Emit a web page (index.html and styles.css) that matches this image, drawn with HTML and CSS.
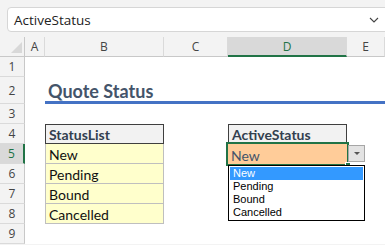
FILE: index.html
```html
<!DOCTYPE html>
<html lang="en">
<head>
    <meta charset="UTF-8">
    <title>Quote Status</title>
    <link rel="stylesheet" href="styles.css">
</head>
<body>

    <!-- Caixa de nome -->
    <div class="top-bar">
        <div class="name-box">
            <span>ActiveStatus</span>
            <svg class="chevron" width="10" height="6" viewBox="0 0 10 6"><path d="M1 1 L5 5 L9 1" fill="none" stroke="#444" stroke-width="1.1"/></svg>
        </div>
    </div>

    <!-- Planilha -->
    <div class="sheet">
        <div class="corner"><span class="corner-tri"></span></div>
        <div class="col-hdr">A</div>
        <div class="col-hdr">B</div>
        <div class="col-hdr">C</div>
        <div class="col-hdr active">D</div>
        <div class="col-hdr">E</div>

        <div class="row-hdr">1</div>
        <div class="blank span-all"></div>

        <div class="row-hdr">2</div>
        <div class="blank"></div>
        <div class="title">Quote Status</div>

        <div class="row-hdr">3</div>
        <div class="blank span-all"></div>

        <div class="row-hdr">4</div>
        <div class="blank"></div>
        <div class="tbl-head">StatusList</div>
        <div class="blank"></div>
        <div class="tbl-head">ActiveStatus</div>
        <div class="blank"></div>

        <div class="row-hdr active">5</div>
        <div class="blank"></div>
        <div class="tbl-cell">New</div>
        <div class="blank"></div>
        <div class="active-cell">
            New
            <span class="fill-handle"></span>
            <div class="drop-btn"><span class="drop-arrow"></span></div>
            <ul class="drop-list">
                <li class="selected">New</li>
                <li>Pending</li>
                <li>Bound</li>
                <li>Cancelled</li>
            </ul>
        </div>
        <div class="blank"></div>

        <div class="row-hdr">6</div>
        <div class="blank"></div>
        <div class="tbl-cell">Pending</div>
        <div class="blank span-rest"></div>

        <div class="row-hdr">7</div>
        <div class="blank"></div>
        <div class="tbl-cell">Bound</div>
        <div class="blank span-rest"></div>

        <div class="row-hdr">8</div>
        <div class="blank"></div>
        <div class="tbl-cell">Cancelled</div>
        <div class="blank span-rest"></div>

        <div class="row-hdr">9</div>
        <div class="blank span-all"></div>
    </div>

</body>
</html>
```

FILE: styles.css
```css
* {
    margin: 0;
    padding: 0;
    box-sizing: border-box;
}

body {
    font-family: Lato, "Liberation Sans", sans-serif;
    background-color: #f3f3f3;
    width: 385px;
    height: 245px;
    overflow: hidden;
}

/* Barra da caixa de nome */
.top-bar {
    height: 37px;
    padding: 7px 0 0 7px;
    overflow: hidden;
}

.name-box {
    height: 25px;
    width: calc(100% + 8px);
    background-color: #ffffff;
    border: 1px solid #d6d6d6;
    border-radius: 4px;
    display: flex;
    align-items: center;
    padding-left: 6px;
    font-family: "Open Sans", sans-serif;
    font-size: 13.5px;
    color: #222;
}

.chevron {
    margin-left: 278px;
}

/* Grade da planilha */
.sheet {
    display: grid;
    grid-template-columns: 25px 20px 119px 64px 119px 38px;
    grid-template-rows: 20px 20px 27px 20px 20px 20px 20px 20px 20px 20px;
    background-color: #ffffff;
}

.corner {
    background-color: #f3f3f3;
    border-right: 1px solid #c8c8c8;
    border-bottom: 1px solid #c8c8c8;
    position: relative;
}

.corner-tri {
    position: absolute;
    right: 2px;
    bottom: 3px;
    width: 0;
    height: 0;
    border-left: 11px solid transparent;
    border-bottom: 11px solid #d8d8d8;
}

.col-hdr {
    background-color: #f3f3f3;
    border-right: 1px solid #dadada;
    border-bottom: 1px solid #c8c8c8;
    font-family: "Open Sans", sans-serif;
    font-size: 12px;
    color: #444;
    display: flex;
    justify-content: center;
    align-items: center;
}

.col-hdr.active {
    background-color: #d9d9d9;
    border-bottom: 2px solid #217346;
    color: #217346;
}

.row-hdr {
    background-color: #f3f3f3;
    border-right: 1px solid #c8c8c8;
    border-bottom: 1px solid #dadada;
    font-family: "Open Sans", sans-serif;
    font-size: 12px;
    color: #444;
    display: flex;
    justify-content: center;
    align-items: center;
}

.row-hdr.active {
    background-color: #d9d9d9;
    border-right: 2px solid #217346;
    color: #217346;
}

.span-all {
    grid-column: 2 / -1;
}

.span-rest {
    grid-column: 4 / -1;
}

.title {
    grid-column: 3 / -1;
    border-bottom: 3px solid #4472c4;
    font-weight: bold;
    font-size: 18px;
    line-height: 20px;
    color: #44546a;
    padding: 4px 0 0 3px;
}

.tbl-head,
.tbl-cell,
.active-cell {
    font-size: 14px;
    line-height: 17px;
    padding: 0 3px;
    display: flex;
    align-items: flex-end;
}

.tbl-head {
    background-color: #f2f2f2;
    border: 1px solid #3f3f3f;
    font-weight: bold;
    color: #333f4f;
}

.tbl-cell {
    background-color: #ffffcc;
    border: 1px solid #bfbfbf;
    border-top: none;
    color: #111;
}

/* Célula ativa com validação */
.active-cell {
    background-color: #ffcc99;
    color: #44546a;
    position: relative;
    box-shadow: 0 0 0 2px #217346;
}

.fill-handle {
    position: absolute;
    right: -4px;
    bottom: -4px;
    width: 6px;
    height: 6px;
    background-color: #217346;
    border: 1px solid #ffffff;
}

.drop-btn {
    position: absolute;
    left: 120px;
    top: 1px;
    width: 17px;
    height: 17px;
    background-color: #e3e3e3;
    border: 1px solid #a6a6a6;
    display: flex;
    justify-content: center;
    align-items: center;
}

.drop-arrow {
    width: 0;
    height: 0;
    border-left: 3.5px solid transparent;
    border-right: 3.5px solid transparent;
    border-top: 3.5px solid #555;
}

.drop-list {
    position: absolute;
    left: 0;
    top: 21px;
    width: 137px;
    background-color: #ffffff;
    border: 1px solid #000000;
    list-style: none;
    padding: 1px;
    font-family: "Liberation Sans", sans-serif;
    font-size: 11px;
    line-height: 13px;
    color: #000;
    z-index: 2;
}

.drop-list li {
    height: 13px;
    padding-left: 3px;
}

.drop-list li.selected {
    background-color: #3399ff;
    color: #ffffff;
}
```
